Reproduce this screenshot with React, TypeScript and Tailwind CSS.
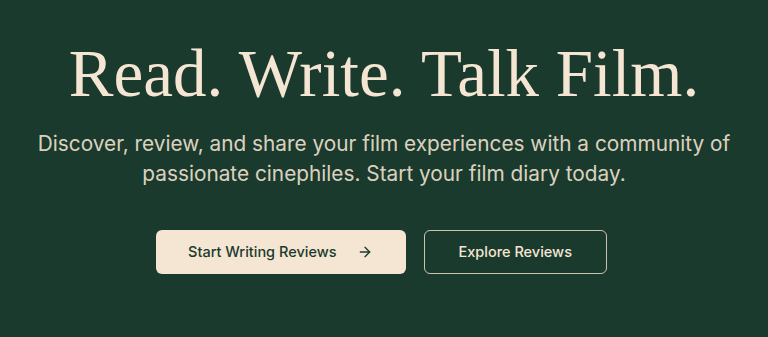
import { ArrowRight } from "lucide-react";

export default function App() {
  return (
    <section className="min-h-[337px] bg-[#1b3a2e] font-['Inter','Liberation_Sans',sans-serif] text-[#f5e6d3]">
      <div className="mx-auto flex max-w-[768px] flex-col items-center px-4 pt-[33px] text-center">
        <h1 className="font-['Liberation_Serif',serif] text-[67px] font-normal leading-[80px]">
          Read. Write. Talk Film.
        </h1>
        <p className="mt-[16px] max-w-[730px] text-[20.8px] leading-[30px] text-[#f5e6d3]/90">
          Discover, review, and share your film experiences with a community of passionate cinephiles. Start your film diary today.
        </p>
        <div className="mr-[5px] mt-[41px] flex items-center gap-[18px]">
          <button className="flex h-[44px] items-center rounded-md bg-[#f5e6d3] pl-8 pr-[33px] text-[14.5px] font-medium text-[#1b3a2e]">
            Start Writing Reviews
            <ArrowRight className="ml-5 h-4 w-4" strokeWidth={2} />
          </button>
          <button className="flex h-[44px] items-center rounded-md border border-[#f5e6d3]/80 px-[34px] text-[14.5px] font-medium text-[#f5e6d3]">
            Explore Reviews
          </button>
        </div>
      </div>
    </section>
  );
}
